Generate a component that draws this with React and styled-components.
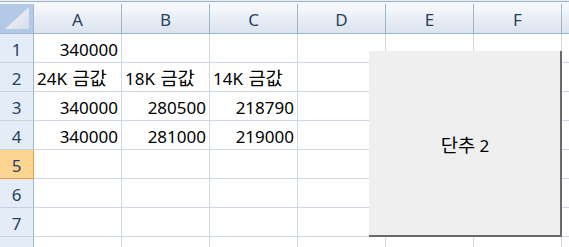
import React from "react"
import styled, { createGlobalStyle } from "styled-components"

const GlobalStyle = createGlobalStyle`
  html, body {
    margin: 0;
    padding: 0;
    background: #ffffff;
    overflow: hidden;
  }
  body {
    font-family: "Noto Sans", "Noto Sans CJK KR", sans-serif;
  }
`

const Sheet = styled.div`
  position: relative;
  width: 569px;
  height: 247px;
  overflow: hidden;
  background: #fff;
`

const TopStrip = styled.div`
  height: 4px;
  background: linear-gradient(
    to bottom,
    #e9eef5 0px,
    #e9eef5 1px,
    #9fb3cb 1px,
    #9fb3cb 2px,
    #f3f6fa 2px
  );
`

const Grid = styled.div`
  display: grid;
  grid-template-columns: 34px repeat(6, 88px) 40px;
  grid-template-rows: 30px;
  grid-auto-rows: 29px;
  font-size: 17px;
  line-height: 1;
`

const Corner = styled.div`
  position: relative;
  background: #b3c9e7;
  border-right: 1px solid #9eb6ce;
  border-bottom: 1px solid #9eb6ce;
  svg {
    position: absolute;
    right: 4px;
    bottom: 4px;
  }
`

const ColHead = styled.div`
  display: flex;
  align-items: center;
  justify-content: center;
  padding-top: 2px;
  color: #27415f;
  background: linear-gradient(to bottom, #f8fafc 0%, #e9eef5 50%, #dbe3ee 100%);
  border-right: 1px solid #9eb6ce;
  border-bottom: 1px solid #9eb6ce;
`

const RowHead = styled.div`
  display: flex;
  align-items: center;
  justify-content: center;
  padding-top: 2px;
  color: #27415f;
  background: ${p => (p.$active ? "#fcd590" : "#e4ecf7")};
  border-right: 1px solid ${p => (p.$active ? "#f29b47" : "#9eb6ce")};
  border-bottom: 1px solid ${p => (p.$active ? "#f29b47" : "#c2d0e2")};
`

const Cell = styled.div`
  display: flex;
  align-items: center;
  justify-content: ${p => (p.$num ? "flex-end" : "flex-start")};
  padding: 2px 3px 0 3px;
  color: #000;
  white-space: nowrap;
  overflow: visible;
  border-right: 1px solid #d0d7e5;
  border-bottom: 1px solid #d0d7e5;
`

// hangul in the reference is drawn a little larger than the latin digits
const Hangul = styled.span`
  font-size: 1.1em;
  margin-left: 1px;
`

const FormButton = styled.div`
  position: absolute;
  left: 369px;
  top: 51px;
  width: 191px;
  height: 184px;
  display: flex;
  align-items: center;
  justify-content: center;
  background: #efefef;
  border-right: 2px solid #696969;
  border-bottom: 2px solid #696969;
  font-size: 17px;
  color: #000;
`

const columns = ["A", "B", "C", "D", "E", "F", ""]

const data = [
  [{ v: "340000", num: true }],
  [
    { v: "24K ", ko: "금값" },
    { v: "18K ", ko: "금값" },
    { v: "14K ", ko: "금값" },
  ],
  [
    { v: "340000", num: true },
    { v: "280500", num: true },
    { v: "218790", num: true },
  ],
  [
    { v: "340000", num: true },
    { v: "281000", num: true },
    { v: "219000", num: true },
  ],
  [],
  [],
  [],
  [],
]

const App = () => {
  return (
    <Sheet>
      <GlobalStyle />
      <TopStrip />
      <Grid>
        <Corner>
          <svg width="24" height="22" viewBox="0 0 24 22">
            <defs>
              <linearGradient id="tri" x1="0" y1="0" x2="1" y2="1">
                <stop offset="0" stopColor="#f4f7fb" />
                <stop offset="1" stopColor="#d6dee8" />
              </linearGradient>
            </defs>
            <polygon points="24,0 24,22 0,22" fill="url(#tri)" />
          </svg>
        </Corner>
        {columns.map((c, i) => (
          <ColHead key={i}>{c}</ColHead>
        ))}
        {data.map((row, r) => (
          <React.Fragment key={r}>
            <RowHead $active={r === 4}>{r + 1}</RowHead>
            {columns.map((c, i) => {
              const cell = row[i]
              return (
                <Cell key={i} $num={cell && cell.num}>
                  {cell && (
                    <span>
                      {cell.v}
                      {cell.ko && <Hangul>{cell.ko}</Hangul>}
                    </span>
                  )}
                </Cell>
              )
            })}
          </React.Fragment>
        ))}
      </Grid>
      <FormButton>
        <span>
          <Hangul>단추</Hangul> 2
        </span>
      </FormButton>
    </Sheet>
  )
}

export default App
